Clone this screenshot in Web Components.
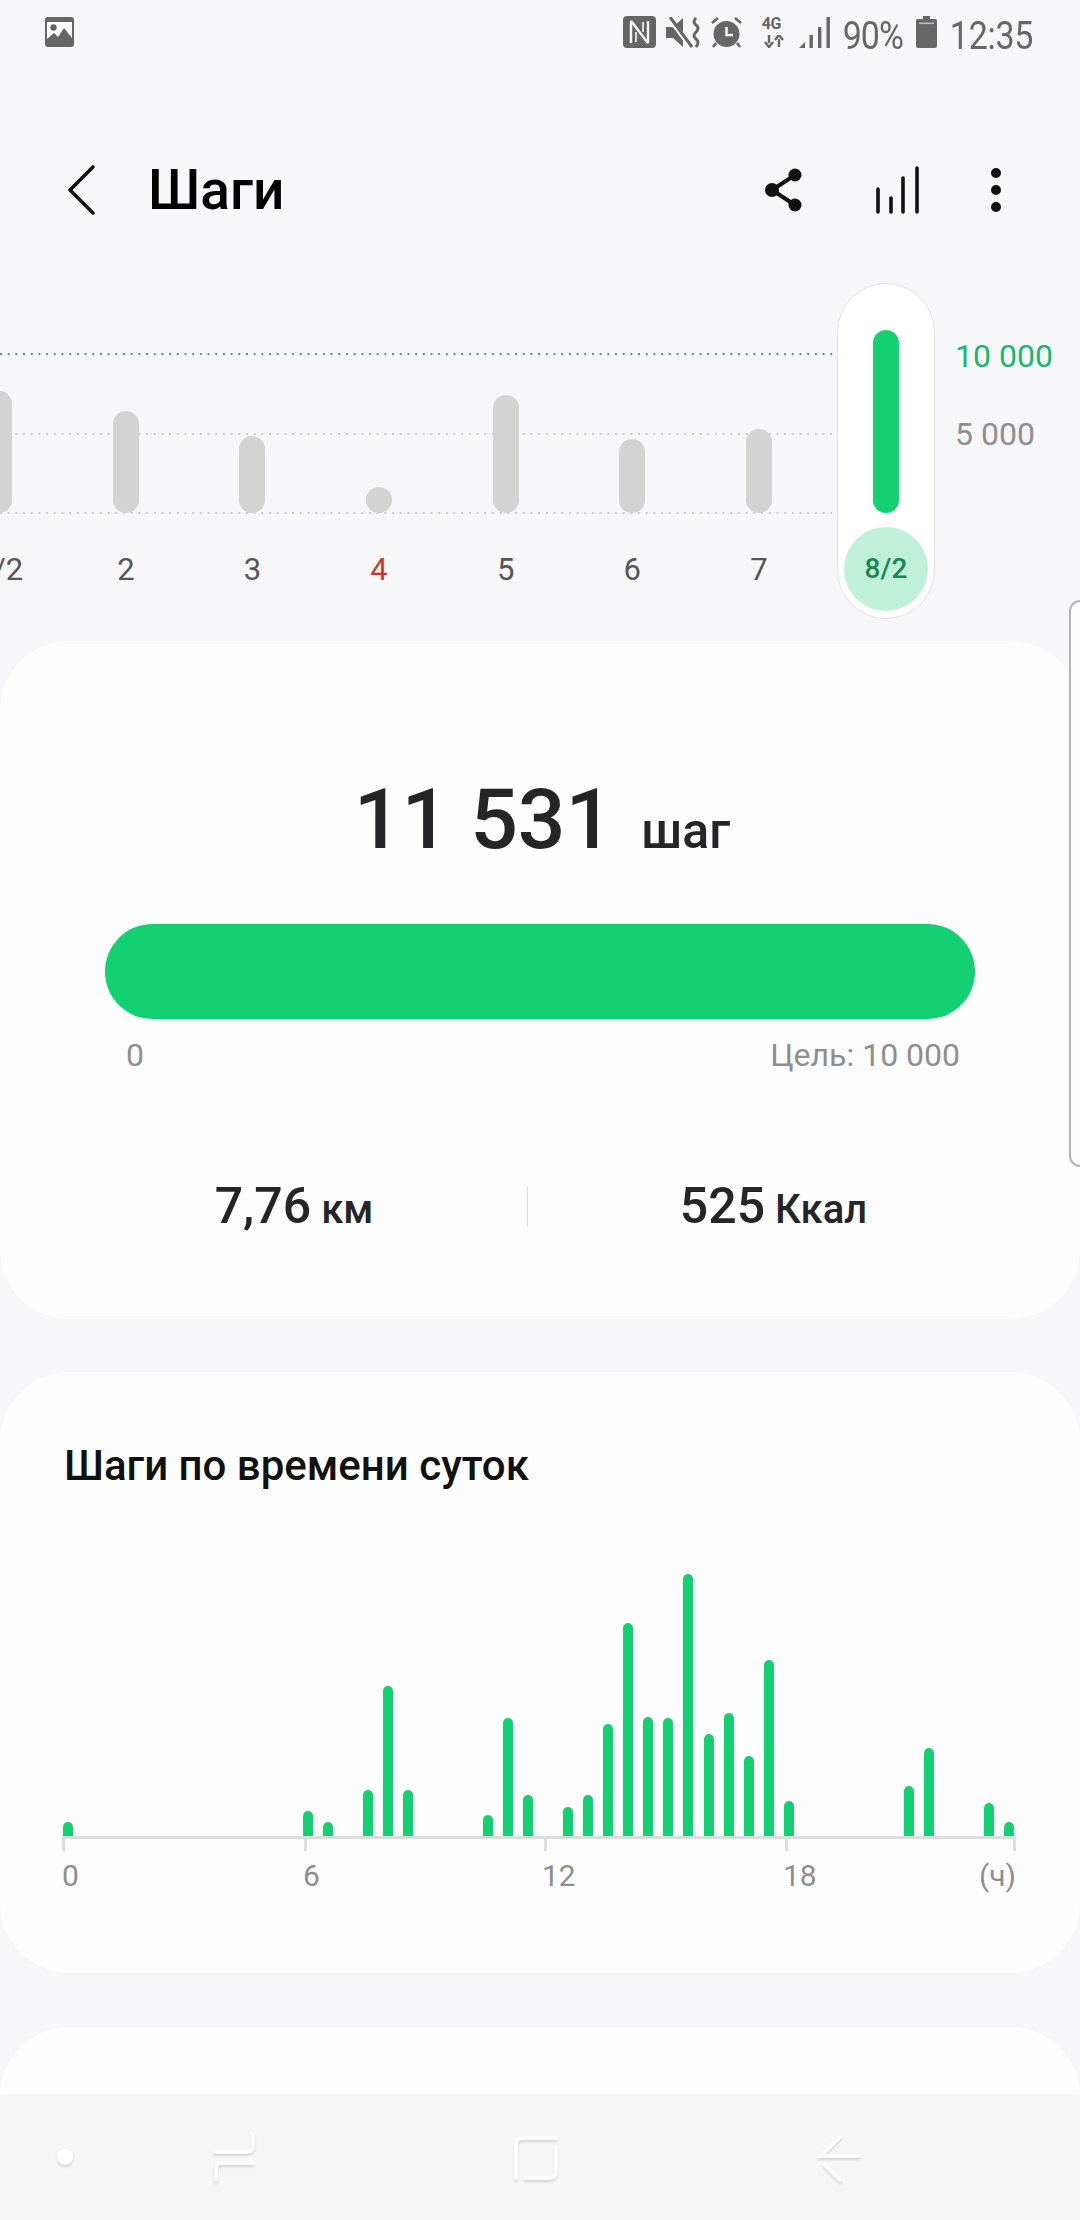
<!DOCTYPE html>
<html lang="ru">
<head>
<meta charset="utf-8">
<title>Шаги</title>
<style>
  html, body {
    margin: 0;
    width: 1080px;
    height: 2220px;
    overflow: hidden;
    background: #f7f7f9;
    font-family: Roboto, "Liberation Sans", sans-serif;
  }
  body {
    position: relative;
    display: flex;
    flex-direction: column;
  }
  main {
    flex: 1;
    min-height: 0;
    overflow: hidden;
  }
</style>
</head>
<body>
<status-bar></status-bar>
<main>
  <app-bar title="Шаги"></app-bar>
  <trend-chart></trend-chart>
  <step-card height="678" gap="53">
    <step-summary steps="11 531" unit="шаг" goal="Цель: 10 000" distance="7,76" calories="525"></step-summary>
  </step-card>
  <step-card height="601" gap="54">
    <hourly-chart title="Шаги по времени суток"></hourly-chart>
  </step-card>
  <step-card height="200" gap="0"></step-card>
</main>
<nav-bar></nav-bar>
<edge-handle></edge-handle>

<script>
/**
 * Attaches an open shadow root with the given markup.
 *
 * @param {HTMLElement} host - The custom element.
 * @param {string} html - Styles and markup.
 */
function render (host, html) {
  if (!host.shadowRoot) host.attachShadow({ mode: 'open' })
  host.shadowRoot.innerHTML = html
}

customElements.define('status-bar',
  /**
   * Phone status bar.
   */
  class extends HTMLElement {
    connectedCallback () {
      render(this, `
<style>
  :host { display: flex; align-items: flex-start; height: 70px; color: #666; flex: none; position: relative; }
  svg { display: block; flex: none; }
  .gallery { margin: 17px 0 0 45px; }
  .right { display: flex; margin-left: auto; align-items: flex-start; padding-right: 47px; }
  .nfc { margin: 16px 10px 0 0; }
  .mute { margin: 17px 11px 0 0; }
  .alarm { margin: 17px 20px 0 0; }
  .net { margin: 18px 13px 0 0; width: 24px; height: 30px; position: relative; }
  .net span { position: absolute; left: 0; top: -3px; font-size: 16px; font-weight: 700; line-height: 18px; letter-spacing: -.3px; }
  .net svg { position: absolute; left: 2px; top: 17px; }
  .signal { margin: 17px 13px 0 0; }
  .txt { font-size: 34px; line-height: 40px; margin-top: 15px; transform: scaleY(1.13); transform-origin: 50% 50%; letter-spacing: -.3px; white-space: nowrap; }
  .pct { letter-spacing: -1px; }
  .batt { margin: 16px 13px 0 13px; }
</style>
<svg class="gallery" width="29" height="30" viewBox="0 0 29 30">
  <rect width="29" height="30" rx="3" fill="#666"/>
  <rect x="2" y="5" width="25" height="22" fill="#fff"/>
  <circle cx="8.5" cy="10.5" r="3.2" fill="#666"/>
  <path d="M2 22 L9 16 L13 20 L19 11 L27 21 V28 H2Z" fill="#666"/>
</svg>
<div class="right">
  <svg class="nfc" width="33" height="32" viewBox="0 0 33 32">
    <rect width="33" height="32" rx="4" fill="#666"/>
    <path d="M8 27 V6 Q8 5 9 6 L24 26 Q25 27 25 26 V5" fill="none" stroke="#f7f7f9" stroke-width="2.4"/>
    <path d="M13 16 V26 M20 6 V16" fill="none" stroke="#f7f7f9" stroke-width="1.6"/>
  </svg>
  <svg class="mute" width="34" height="31" viewBox="0 0 34 31">
    <path d="M0 10 H7 L17 1 V30 L7 21 H0Z" fill="#666"/>
    <path d="M3 1 L25 30" stroke="#f7f7f9" stroke-width="5"/>
    <path d="M4 0 L26 30" stroke="#666" stroke-width="3"/>
    <path d="M30 1 q-4 4 0 7 t0 7 t0 7 t0 8" fill="none" stroke="#666" stroke-width="3"/>
  </svg>
  <svg class="alarm" width="31" height="31" viewBox="0 0 31 31">
    <circle cx="15.5" cy="17" r="13" fill="#666"/>
    <path d="M1 6 L7 1 M30 6 L24 1 M5 26 L2 30 M26 26 L29 30" stroke="#666" stroke-width="2.6"/>
    <path d="M15.5 10 V18 H22" fill="none" stroke="#f7f7f9" stroke-width="2.6"/>
  </svg>
  <div class="net">
    <span>4G</span>
    <svg width="20" height="13" viewBox="0 0 20 13">
      <path d="M5 0 V8 M1 7 L5 12 L9 7" fill="none" stroke="#666" stroke-width="2.4"/>
      <path d="M15 12 V4 M11 5 L15 0 L19 5" fill="none" stroke="#666" stroke-width="2.4"/>
    </svg>
  </div>
  <svg class="signal" width="31" height="31" viewBox="0 0 31 31">
    <path d="M0 31 L6 25 V31Z" fill="#666"/>
    <rect x="10.5" y="18" width="3.4" height="13" fill="#666"/>
    <rect x="19" y="10" width="3.4" height="21" fill="#666"/>
    <rect x="27.5" y="0" width="3.4" height="31" fill="#666"/>
  </svg>
  <div class="txt pct">90%</div>
  <svg class="batt" width="21" height="32" viewBox="0 0 21 32">
    <path d="M7 0 H14 V3 H19 Q21 3 21 5 V30 Q21 32 19 32 H2 Q0 32 0 30 V5 Q0 3 2 3 H7Z" fill="#666"/>
    <rect x="3" y="6.5" width="15" height="1.6" fill="#bbb"/>
  </svg>
  <div class="txt">12:35</div>
</div>`)
    }
  }
)

customElements.define('app-bar',
  /**
   * Title bar with back arrow and actions.
   */
  class extends HTMLElement {
    connectedCallback () {
      render(this, `
<style>
  :host { display: flex; align-items: center; height: 198px; padding-top: 42px; box-sizing: border-box; position: relative; color: #000; }
  svg { display: block; flex: none; }
  .back { margin-left: 66px; margin-top: -1px; }
  h1 { margin: 0 0 0 50px; font-size: 55px; line-height: 60px; font-weight: 500; }
  .actions { display: flex; align-items: center; margin-left: auto; padding-right: 78px; }
  .share { margin-right: 72px; }
  .bars { margin-right: 70px; }
</style>
<svg class="back" width="32" height="52" viewBox="0 0 32 52">
  <path d="M27 3 L4 26 L27 49" fill="none" stroke="#111" stroke-width="3.6" stroke-linecap="round" stroke-linejoin="round"/>
</svg>
<h1>${this.getAttribute('title')}</h1>
<div class="actions">
  <svg class="share" width="40" height="44" viewBox="0 0 40 44">
    <path d="M31 7 L8 22 L31 37" fill="none" stroke="#111" stroke-width="4"/>
    <circle cx="31" cy="7" r="6.5" fill="#111"/>
    <circle cx="8" cy="22" r="7" fill="#111"/>
    <circle cx="31" cy="37" r="6.5" fill="#111"/>
  </svg>
  <svg class="bars" width="44" height="48" viewBox="0 0 44 48">
    <path d="M2 23 V46 M15 32 V46 M27 12 V46 M41 2 V46" fill="none" stroke="#111" stroke-width="3.6" stroke-linecap="round"/>
  </svg>
  <svg width="12" height="46" viewBox="0 0 12 46">
    <circle cx="6" cy="6" r="5" fill="#111"/>
    <circle cx="6" cy="23" r="5" fill="#111"/>
    <circle cx="6" cy="40" r="5" fill="#111"/>
  </svg>
</div>`)
    }
  }
)

customElements.define('trend-chart',
  /**
   * Daily steps strip with the selected day in a pill.
   */
  class extends HTMLElement {
    connectedCallback () {
      const days = [['1/2', 122], ['2', 102], ['3', 77], ['4', 26, 'sun'], ['5', 118], ['6', 74], ['7', 84]]
      const columns = days.map(([label, height, type]) => `
  <div class="day ${type || ''}">
    <div class="slot"><i style="height:${height}px"></i></div>
    <span>${label}</span>
  </div>`).join('')
      render(this, `
<style>
  :host { display: flex; height: 373px; align-items: flex-start; font-size: 31px; }
  .days { position: relative; width: 837px; height: 100%; overflow: hidden; flex: none; }
  /* the dotted lines run behind the bars */
  .line { position: absolute; left: 0; right: 0; height: 2px;
    background: linear-gradient(to right, #c9c9c9 2px, transparent 2px) 0 0 / 7.7px 2px; }
  .line.goal { background-image: linear-gradient(to right, #17b86e 2px, transparent 2px); }
  .row { position: relative; display: flex; margin-left: -64px; }
  .day { width: 126.6px; flex: none; display: flex; flex-direction: column; align-items: center; color: #55555a; }
  .slot { height: 245px; display: flex; align-items: flex-end; }
  .slot i { display: block; width: 26px; background: #d3d3d3; border-radius: 13px; }
  .day span { margin-top: 37px; line-height: 40px; }
  .sun span { color: #c8392b; }
  .pill { width: 98px; height: 336px; margin-top: 15px; box-sizing: border-box; background: #fff;
    border: 1px solid #e2e2e2; border-radius: 49px; display: flex; flex-direction: column; align-items: center; flex: none; }
  .pill i { display: block; width: 26px; height: 183px; margin-top: 46px; background: #13d072; border-radius: 13px; }
  .today { width: 84px; height: 84px; margin-top: 14px; border-radius: 50%; background: #c0f0d9; color: #17874f;
    font-size: 28px; font-weight: 500; line-height: 84px; text-align: center; }
  .scale { margin-left: 20px; padding-top: 66px; font-size: 32px; line-height: 44px; white-space: nowrap; }
  .scale div:first-child { color: #17b86e; }
  .scale div:last-child { color: #8e8e90; margin-top: 34px; }
</style>
<div class="days">
  <div class="line goal" style="top:85px"></div>
  <div class="line" style="top:165px"></div>
  <div class="line" style="top:244px"></div>
  <div class="row">${columns}</div>
</div>
<div class="pill"><i></i><div class="today">8/2</div></div>
<div class="scale"><div>10 000</div><div>5 000</div></div>`)
    }
  }
)

customElements.define('step-card',
  /**
   * White rounded card.
   */
  class extends HTMLElement {
    connectedCallback () {
      render(this, `
<style>
  :host { display: block; background: #fdfdfe; border-radius: 70px; box-sizing: border-box;
    height: ${this.getAttribute('height')}px; margin-bottom: ${this.getAttribute('gap')}px; }
</style>
<slot></slot>`)
    }
  }
)

customElements.define('step-summary',
  /**
   * Total steps, progress bar, distance and calories.
   */
  class extends HTMLElement {
    connectedCallback () {
      const attr = name => this.getAttribute(name)
      render(this, `
<style>
  :host { display: block; color: #252528; }
  .total { display: flex; justify-content: center; align-items: baseline; padding: 129px 0 0 4px; line-height: 100px; height: 100px; font-weight: 500; }
  .total b { font-size: 84px; font-weight: 500; }
  .total span { font-size: 50px; margin-left: 28px; }
  .bar { height: 95px; margin: 54px 105px 0; background: #13d072; border-radius: 47.5px; }
  .ends { display: flex; justify-content: space-between; margin: 16px 120px 0 126px; font-size: 32px; line-height: 40px; color: #8e8e90; }
  .stats { display: flex; align-items: center; height: 60px; margin-top: 101px; padding: 0 61px; font-weight: 500; }
  .stats div { text-align: center; white-space: nowrap; }
  .stats div:first-child { width: 466px; }
  .stats div:last-child { flex: 1; }
  .stats b { font-size: 50px; font-weight: 500; }
  .stats span { font-size: 40px; margin-left: 10px; }
  .stats hr { flex: none; width: 1px; height: 40px; margin: 0; border: 0; background: #dcdcdc; }
</style>
<div class="total"><b>${attr('steps')}</b><span>${attr('unit')}</span></div>
<div class="bar"></div>
<div class="ends"><span>0</span><span>${attr('goal')}</span></div>
<div class="stats">
  <div><b>${attr('distance')}</b><span>км</span></div>
  <hr>
  <div><b>${attr('calories')}</b><span>Ккал</span></div>
</div>`)
    }
  }
)

customElements.define('hourly-chart',
  /**
   * Steps per half hour over one day.
   */
  class extends HTMLElement {
    connectedCallback () {
      // slot index (half hours) and bar height
      const data = { 0: 14, 12: 25, 13: 14, 15: 46, 16: 150, 17: 46, 21: 21, 22: 118, 23: 41, 25: 29, 26: 41, 27: 112, 28: 213, 29: 119, 30: 118, 31: 262, 32: 102, 33: 123, 34: 80, 35: 176, 36: 35, 42: 50, 43: 88, 46: 33, 47: 14 }
      const bars = Object.entries(data).map(([slot, height]) =>
        `<i style="grid-column:${Number(slot) + 1};height:${height}px"></i>`).join('')
      render(this, `
<style>
  :host { display: block; padding-top: 69px; }
  h2 { margin: 0 0 0 64px; font-size: 42px; line-height: 50px; font-weight: 500; color: #111; }
  .plot { display: grid; grid-template-columns: repeat(48, 20.02px); align-items: end; height: 262px; margin: 83px 0 0 63px; }
  .plot i { display: block; grid-row: 1; width: 10px; background: #13d072; border-radius: 5px 5px 0 0; }
  .axis { display: grid; grid-template-columns: 242px 240px 240.5px 228px 3px; width: 953.5px; height: 12px; margin-left: 62px; border-top: 3px solid #dcdcdc; }
  .axis span { border-left: 3px solid #dcdcdc; }
  .labels { display: grid; grid-template-columns: 241px 239px 241px 1fr; width: 954px; margin: 5px 0 0 62px; font-size: 30px; line-height: 40px; color: #8e8e90; }
  .labels div { display: flex; justify-content: space-between; }
</style>
<h2>${this.getAttribute('title')}</h2>
<div class="plot">${bars}</div>
<div class="axis"><span></span><span></span><span></span><span></span><span></span></div>
<div class="labels"><span>0</span><span>6</span><span>12</span><div><span>18</span><span>(ч)</span></div></div>`)
    }
  }
)

customElements.define('nav-bar',
  /**
   * Android navigation bar with embossed white keys.
   */
  class extends HTMLElement {
    connectedCallback () {
      render(this, `
<style>
  :host { display: block; flex: none; height: 126px; background: #f6f6f6; }
  svg { display: block; filter: drop-shadow(0 2px 1px rgba(0, 0, 0, .14)); }
</style>
<svg width="1080" height="126" viewBox="0 2094 1080 126" fill="none" stroke="#fff" stroke-width="3.6" stroke-linecap="round">
  <circle cx="65" cy="2157" r="8" fill="#fff" stroke="none"/>
  <path d="M215 2152 H247 Q253 2152 253 2146 V2134"/>
  <path d="M253 2163 H222 Q216 2163 216 2169 V2180"/>
  <path d="M556 2138 H523 Q516 2138 516 2145 V2178"/>
  <path d="M526 2178 H549 Q556 2178 556 2171 V2147"/>
  <path d="M840 2137 L821 2156 H859"/>
  <path d="M825 2165 L840 2180"/>
</svg>`)
    }
  }
)

customElements.define('edge-handle',
  /**
   * Edge panel handle lying over the right side of the page.
   */
  class extends HTMLElement {
    connectedCallback () {
      render(this, `
<style>
  :host { position: absolute; right: 0; top: 600px; width: 11px; height: 567px; box-sizing: border-box;
    background: #fdfdfe; border: 2px solid #b4b4b4; border-right: 0; border-radius: 11px 0 0 11px; }
</style>`)
    }
  }
)
</script>
</body>
</html>
